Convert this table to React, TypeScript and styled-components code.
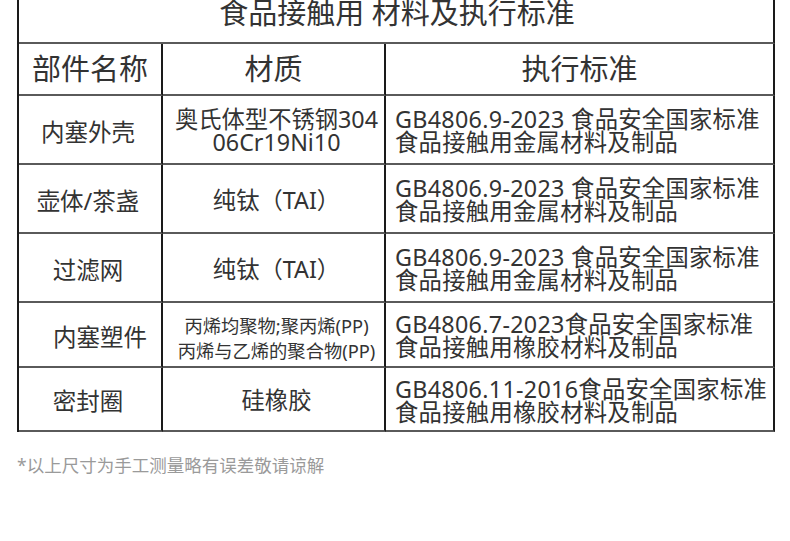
import styled, { createGlobalStyle } from "styled-components";

const GlobalStyle = createGlobalStyle`
    body {
        margin: 0;
        background: #ffffff;
        font-family: "Noto Sans", "Noto Sans CJK SC", sans-serif;
        color: #333;
    }
`;

type Row = {
    part: string;
    material: string[];
    standard: string[];
    height: number;
    small?: boolean;
    shift?: number;
};

const rows: Row[] = [
    {
        part: "内塞外壳",
        material: ["奥氏体型不锈钢304", "06Cr19Ni10"],
        standard: ["GB4806.9-2023 食品安全国家标准", "食品接触用金属材料及制品"],
        height: 69,
    },
    {
        part: "壶体/茶盏",
        material: ["纯钛（TAI）"],
        standard: ["GB4806.9-2023 食品安全国家标准", "食品接触用金属材料及制品"],
        height: 69,
    },
    {
        part: "过滤网",
        material: ["纯钛（TAI）"],
        standard: ["GB4806.9-2023 食品安全国家标准", "食品接触用金属材料及制品"],
        height: 69,
    },
    {
        part: "内塞塑件",
        material: ["丙烯均聚物;聚丙烯(PP)", "丙烯与乙烯的聚合物(PP)"],
        standard: ["GB4806.7-2023食品安全国家标准", "食品接触用橡胶材料及制品"],
        height: 65,
        small: true,
        shift: 12,
    },
    {
        part: "密封圈",
        material: ["硅橡胶"],
        standard: ["GB4806.11-2016食品安全国家标准", "食品接触用橡胶材料及制品"],
        height: 64,
    },
];

const App = () => {
    return (
        <>
            <GlobalStyle />
            <Page>
                <Table>
                    <TitleCell>食品接触用 材料及执行标准</TitleCell>
                    <HeadCell>部件名称</HeadCell>
                    <HeadCell>材质</HeadCell>
                    <HeadCell>执行标准</HeadCell>
                    {rows.map((r) => (
                        <RowGroup key={r.part} $h={r.height}>
                            <PartCell $shift={r.shift ?? 0}>{r.part}</PartCell>
                            <MaterialCell $small={!!r.small}>
                                {r.material.map((m) => (
                                    <Line key={m}>{m}</Line>
                                ))}
                            </MaterialCell>
                            <StandardCell>
                                {r.standard.map((s) => (
                                    <Line key={s}>{s}</Line>
                                ))}
                            </StandardCell>
                        </RowGroup>
                    ))}
                </Table>
                <Note>*以上尺寸为手工测量略有误差敬请谅解</Note>
            </Page>
        </>
    );
};

const Page = styled.div`
    width: 790px;
    height: 541px;
    padding-left: 17px;
    box-sizing: border-box;
    overflow: hidden;
`;

const Table = styled.div`
    display: grid;
    grid-template-columns: 144px 223px 389px;
    width: 757px;
    border-left: 2px solid #1a1a1a;
    box-sizing: border-box;
`;

const Cell = styled.div`
    box-sizing: border-box;
    border-right: 2px solid #1a1a1a;
    border-bottom: 2px solid #5a5a5a;
    display: flex;
    flex-direction: column;
    justify-content: center;
    align-items: center;
    color: #333;
    white-space: nowrap;
`;

const TitleCell = styled(Cell)`
    grid-column: 1 / -1;
    height: 46px;
    justify-content: flex-start;
    font-size: 29px;
    line-height: 30px;
    margin-top: -2px;
    padding-left: 2px;
`;

const HeadCell = styled(Cell)`
    height: 52px;
    font-size: 29px;
    line-height: 1;
    padding-bottom: 2px;
`;

const RowGroup = styled.div<{ $h: number }>`
    display: contents;

    & > div {
        height: ${(p) => p.$h}px;
    }
`;

const PartCell = styled(Cell)<{ $shift: number }>`
    font-size: 23.5px;
    padding-left: ${(p) => p.$shift * 2}px;
    padding-right: 4px;
    padding-top: 2px;
`;

const MaterialCell = styled(Cell)<{ $small: boolean }>`
    font-size: ${(p) => (p.$small ? "18.3px" : "23.3px")};
    line-height: ${(p) => (p.$small ? "25px" : "23px")};
    padding-left: 6px;
    padding-top: ${(p) => (p.$small ? "6px" : "3px")};
`;

const StandardCell = styled(Cell)`
    align-items: flex-start;
    padding-left: 9px;
    padding-top: 3px;
    font-size: 23.3px;
    line-height: 23px;
    letter-spacing: 0.3px;
`;

const Line = styled.div``;

const Note = styled.p`
    margin: 22px 0 0;
    font-size: 17.5px;
    line-height: 1.3;
    color: #9a9a9a;
`;

export default App;
